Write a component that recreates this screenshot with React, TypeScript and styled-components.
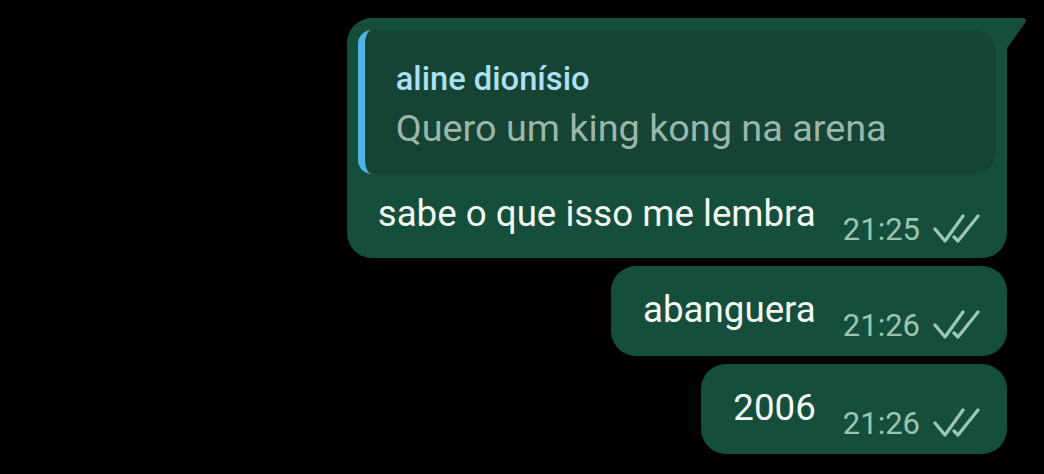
import React from "react";
import styled, { createGlobalStyle, css } from "styled-components";

const GlobalStyle = createGlobalStyle`
  html, body {
    margin: 0;
    padding: 0;
    background: #020000;
  }
  body {
    width: 1044px;
    height: 474px;
    overflow: hidden;
    font-family: Roboto, "Noto Sans", sans-serif;
  }
`;

const Chat = styled.div`
  display: flex;
  flex-direction: column;
  align-items: flex-end;
  gap: 8px;
  padding: 18px 37px 0 0;
`;

const Bubble = styled.div<{ $tail?: boolean }>`
  position: relative;
  display: flex;
  flex-direction: column;
  align-items: stretch;
  background: #164e3c;
  border-radius: 25px;
  ${({ $tail }) =>
    $tail &&
    css`
      border-top-right-radius: 0;
    `}
`;

const Tail = styled.svg`
  position: absolute;
  top: 0;
  right: -21px;
  width: 22px;
  height: 32px;
  fill: #164e3c;
`;

const Reply = styled.div`
  margin: 12px 11px 0;
  height: 144px;
  box-sizing: border-box;
  padding: 33px 20px 0 31px;
  background: #154334;
  border-left: 7px solid #4fb4e4;
  border-radius: 14px 22px 22px 14px;
`;

const ReplyName = styled.div`
  font-size: 32.7px;
  font-weight: 500;
  line-height: 33px;
  color: #ace0f3;
`;

const ReplyText = styled.div`
  margin-top: 14px;
  font-size: 37.8px;
  line-height: 37px;
  color: #9bb6aa;
  white-space: nowrap;
`;

const Row = styled.div<{ $afterReply?: boolean }>`
  display: flex;
  align-items: flex-start;
  padding: ${({ $afterReply }) =>
    $afterReply ? "21px 27px 13px 31px" : "25px 27px 15px 32px"};
`;

const Text = styled.span`
  font-size: 36.7px;
  line-height: 37px;
  color: #f3f8f5;
  white-space: nowrap;
`;

const Meta = styled.span`
  display: flex;
  align-items: center;
  gap: 12px;
  margin: 19px 0 0 27px;
  font-size: 31px;
  line-height: 31px;
  color: #9cc4b1;
`;

const Checks = styled.svg`
  width: 48px;
  height: 30px;
  margin-top: -4px;
  fill: none;
  stroke: #9cc8b4;
  stroke-width: 3.2;
  stroke-linecap: round;
  stroke-linejoin: round;
`;

function ReadMark() {
  return (
    <Checks viewBox="0 0 48 30">
      <path d="M3 16 L13 28 L31 3" />
      <path d="M22 24 L26 28 L46 3" />
    </Checks>
  );
}

type Msg = { text: string; time: string };

function Message({ text, time }: Msg) {
  return (
    <Bubble>
      <Row>
        <Text>{text}</Text>
        <Meta>
          {time}
          <ReadMark />
        </Meta>
      </Row>
    </Bubble>
  );
}

export default function App() {
  return (
    <>
      <GlobalStyle />
      <Chat>
        <Bubble $tail>
          <Tail viewBox="0 0 22 32">
            <path d="M0 0 H16 Q22 0 19 5 L0 32 Z" />
          </Tail>
          <Reply>
            <ReplyName>aline dionísio</ReplyName>
            <ReplyText>Quero um king kong na arena</ReplyText>
          </Reply>
          <Row $afterReply>
            <Text>sabe o que isso me lembra</Text>
            <Meta>
              21:25
              <ReadMark />
            </Meta>
          </Row>
        </Bubble>
        <Message text="abanguera" time="21:26" />
        <Message text="2006" time="21:26" />
      </Chat>
    </>
  );
}
